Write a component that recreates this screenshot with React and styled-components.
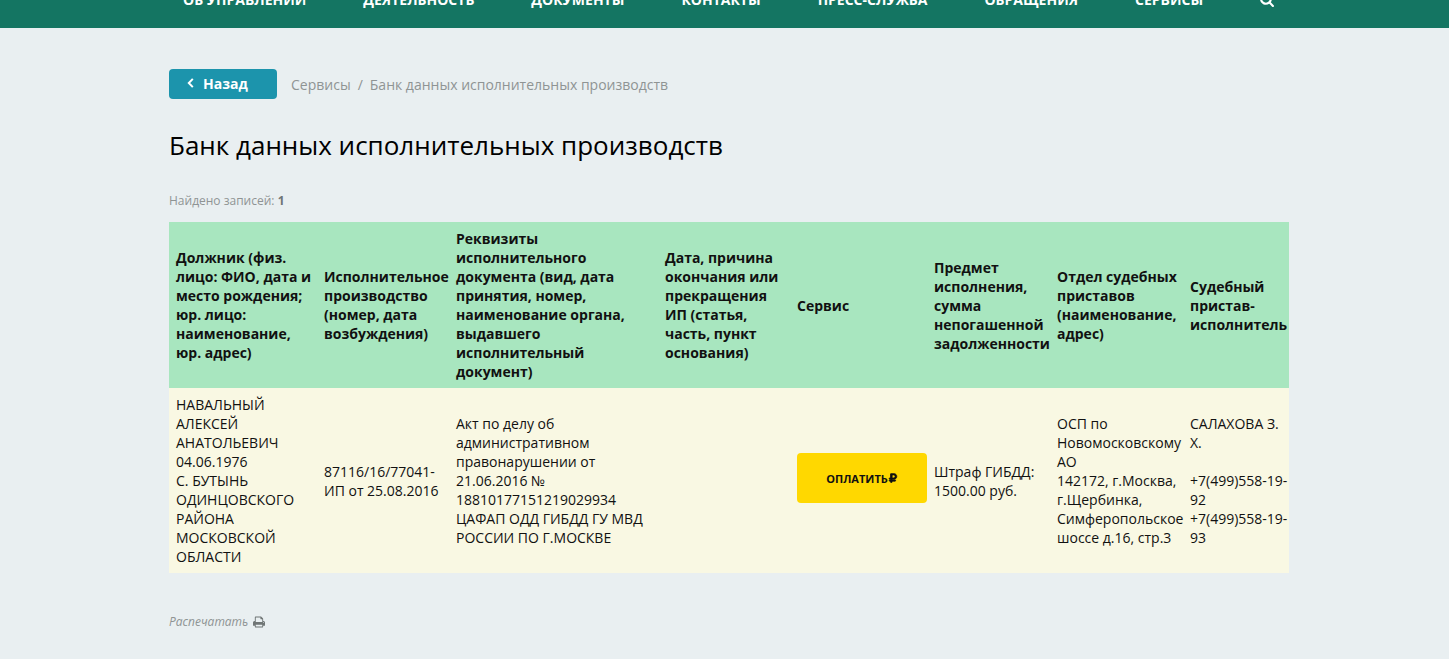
import React from 'react';
import styled, { createGlobalStyle } from 'styled-components';
import { FaRubleSign } from 'react-icons/fa';

const GlobalStyle = createGlobalStyle`
  * {
    box-sizing: border-box;
  }

  body {
    margin: 0;
    background: #e9eff1;
    color: #111;
    font-family: 'Open Sans', 'Noto Sans', sans-serif;
    font-size: 14px;
    line-height: 19px;
  }
`;

const Wrapper = styled.div`
  width: 100%;
  max-width: 1129px;
  margin: 0 auto;
  padding-left: 9px;
`;

const Header = styled.header`
  height: 28px;
  overflow: hidden;
  background: #147562;
`;

const Nav = styled.nav`
  display: flex;
  align-items: flex-end;
  gap: 57px;
  height: 28px;
  padding: 0 14px 19px;
`;

const NavLink = styled.a`
  color: #fff;
  font-weight: 700;
  text-transform: uppercase;
  text-decoration: none;
  white-space: nowrap;
`;

const SearchButton = styled.button`
  display: flex;
  padding: 0 0 2px;
  border: 0;
  background: none;
  color: #fff;
`;

const TopRow = styled.div`
  display: flex;
  align-items: center;
  gap: 14px;
  padding-top: 41px;
`;

const BackLink = styled.a`
  display: flex;
  align-items: center;
  gap: 9px;
  width: 108px;
  height: 30px;
  padding: 0 0 2px 18px;
  border-radius: 4px;
  background: #1c94ac;
  color: #fff;
  font-weight: 700;
  text-decoration: none;
`;

const Breadcrumbs = styled.nav`
  display: flex;
  gap: 7px;
  color: #8f9494;
`;

const Crumb = styled.a`
  color: inherit;
  text-decoration: none;
`;

const Title = styled.h1`
  margin: 28px 0 0;
  color: #000;
  font-size: 26px;
  font-weight: 500;
  line-height: 36px;
`;

const Found = styled.p`
  margin: 28px 0 12px;
  color: #8f9494;
  font-size: 12px;

  b {
    color: #6f7575;
  }
`;

const Table = styled.table`
  width: 100%;
  border-collapse: collapse;
  table-layout: fixed;
`;

const Th = styled.th`
  padding: 7px 0 7px 7px;
  background: #a8e6bf;
  font-weight: 700;
  text-align: left;
`;

const Td = styled.td`
  padding: 7px 0 7px 7px;
  background: #f9f8e3;
  white-space: pre-line;
`;

const PayButton = styled.button`
  display: flex;
  align-items: center;
  justify-content: center;
  width: 100%;
  height: 50px;
  margin-bottom: 5px;
  padding: 0;
  border: 0;
  border-radius: 4px;
  background: #ffd800;
  color: #111;
  font-family: inherit;
  font-size: 11px;
  font-weight: 700;
  text-transform: uppercase;
`;

const PrintLink = styled.a`
  display: inline-flex;
  align-items: center;
  gap: 5px;
  margin-top: 39px;
  color: #8f9494;
  font-size: 12px;
  font-style: italic;
  text-decoration: none;
`;

const BackIcon = () => (
  <svg width="7" height="10" viewBox="0 0 7 10" fill="none" stroke="currentColor" strokeWidth="2" aria-hidden="true">
    <path d="M5.8 0.9L1.8 5L5.8 9.1" />
  </svg>
);

const SearchIcon = () => (
  <svg width="14" height="14" viewBox="0 0 1664 1664" fill="currentColor" aria-hidden="true">
    <path
      transform="translate(0 1408) scale(1 -1)"
      d="M1152 704q0 185 -131.5 316.5t-316.5 131.5t-316.5 -131.5t-131.5 -316.5t131.5 -316.5t316.5 -131.5t316.5 131.5t131.5 316.5zM1664 -128q0 -52 -38 -90t-90 -38q-54 0 -90 38l-343 342q-179 -124 -399 -124q-143 0 -273.5 55.5t-225 150t-150 225t-55.5 273.5t55.5 273.5t150 225t225 150t273.5 55.5t273.5 -55.5t225 -150t150 -225t55.5 -273.5q0 -220 -124 -399l343 -343q37 -37 37 -90z"
    />
  </svg>
);

const PrintIcon = () => (
  <svg width="12" height="12" viewBox="0 0 1664 1536" fill="#6f7575" aria-hidden="true">
    <path
      transform="translate(0 1408) scale(1 -1)"
      d="M384 0h896v256h-896v-256zM384 640h896v384h-160q-40 0 -68 28t-28 68v160h-640v-640zM1536 576q0 26 -19 45t-45 19t-45 -19t-19 -45t19 -45t45 -19t45 19t19 45zM1664 576v-416q0 -13 -9.5 -22.5t-22.5 -9.5h-224v-160q0 -40 -28 -68t-68 -28h-960q-40 0 -68 28t-28 68v160h-224q-13 0 -22.5 9.5t-9.5 22.5v416q0 79 56.5 135.5t135.5 56.5h64v544q0 40 28 68t68 28h672q40 0 88 -20t76 -48l152 -152q28 -28 48 -76t20 -88v-256h64q79 0 135.5 -56.5t56.5 -135.5z"
    />
  </svg>
);

const menu = [
  'Об управлении',
  'Деятельность',
  'Документы',
  'Контакты',
  'Пресс-служба',
  'Обращения',
  'Сервисы',
];

const columns = [
  { width: 148, title: 'Должник (физ. лицо: ФИО, дата и место рождения; юр. лицо: наименование, юр. адрес)' },
  { width: 132, title: 'Исполнительное производство (номер, дата возбуждения)' },
  { width: 209, title: 'Реквизиты исполнительного документа (вид, дата принятия, номер, наименование органа, выдавшего исполнительный документ)' },
  { width: 132, title: 'Дата, причина окончания или прекращения ИП (статья, часть, пункт основания)' },
  { width: 137, title: 'Сервис' },
  { width: 123, title: 'Предмет исполнения, сумма непогашенной задолженности' },
  { width: 133, title: 'Отдел судебных приставов (наименование, адрес)' },
  { width: 106, title: 'Судебный пристав-исполнитель' },
];

const records = [
  {
    debtor: 'НАВАЛЬНЫЙ АЛЕКСЕЙ АНАТОЛЬЕВИЧ\n04.06.1976\nС. БУТЫНЬ ОДИНЦОВСКОГО РАЙОНА МОСКОВСКОЙ ОБЛАСТИ',
    number: '87116/16/77041-ИП от 25.08.2016',
    document: 'Акт по делу об административном правонарушении от 21.06.2016 № 18810177151219029934\nЦАФАП ОДД ГИБДД ГУ МВД РОССИИ ПО Г.МОСКВЕ',
    ending: '',
    subject: 'Штраф ГИБДД: 1500.00 руб.',
    department: 'ОСП по Новомосковскому АО\n142172, г.Москва, г.Щербинка, Симферопольское шоссе д.16, стр.3',
    bailiff: 'САЛАХОВА З. Х.\n\n+7(499)558-19-92\n+7(499)558-19-93',
  },
];

const App = () => {
  return (
    <>
      <GlobalStyle />
      <Header>
        <Wrapper>
          <Nav>
            {menu.map((item) => (
              <NavLink href="#" key={item}>{item}</NavLink>
            ))}
            <SearchButton type="button" aria-label="Поиск">
              <SearchIcon />
            </SearchButton>
          </Nav>
        </Wrapper>
      </Header>
      <Wrapper as="main">
        <TopRow>
          <BackLink href="#">
            <BackIcon />
            Назад
          </BackLink>
          <Breadcrumbs>
            <Crumb href="#">Сервисы</Crumb>
            <span>/</span>
            <span>Банк данных исполнительных производств</span>
          </Breadcrumbs>
        </TopRow>
        <Title>Банк данных исполнительных производств</Title>
        <Found>Найдено записей: <b>{records.length}</b></Found>
        <Table>
          <colgroup>
            {columns.map((column) => (
              <col key={column.title} width={column.width} />
            ))}
          </colgroup>
          <thead>
            <tr>
              {columns.map((column) => (
                <Th key={column.title} scope="col">{column.title}</Th>
              ))}
            </tr>
          </thead>
          <tbody>
            {records.map((record) => (
              <tr key={record.number}>
                <Td>{record.debtor}</Td>
                <Td>{record.number}</Td>
                <Td>{record.document}</Td>
                <Td>{record.ending}</Td>
                <Td>
                  <PayButton type="button">
                    Оплатить
                    <FaRubleSign size={10} stroke="currentColor" strokeWidth={40} />
                  </PayButton>
                </Td>
                <Td>{record.subject}</Td>
                <Td>{record.department}</Td>
                <Td>{record.bailiff}</Td>
              </tr>
            ))}
          </tbody>
        </Table>
        <PrintLink href="#">
          Распечатать
          <PrintIcon />
        </PrintLink>
      </Wrapper>
    </>
  );
};

export default App;
